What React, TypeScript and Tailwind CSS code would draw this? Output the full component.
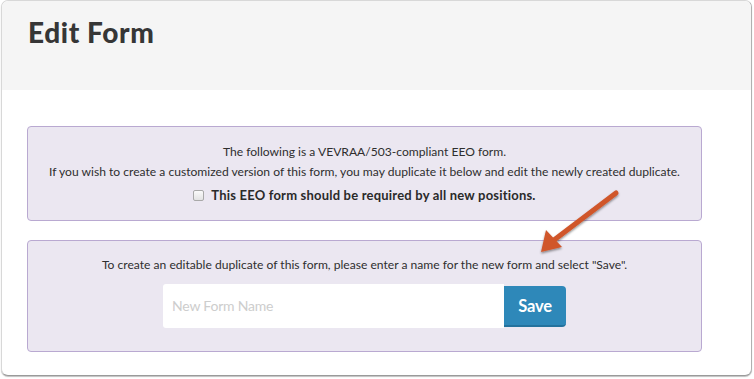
import React from "react";

export default function App() {
  return (
    <div className="relative w-[754px] h-[379px] bg-white overflow-hidden" style={{ fontFamily: "Lato, 'Open Sans', sans-serif" }}>
      <div className="ml-px w-[751px] h-[376px] border border-[#d8d8d8] border-b-[#9a9a9a] border-r-[#b0b0b0] rounded-[7px] overflow-hidden bg-white shadow-[0_1px_1px_rgba(0,0,0,0.25)]">
        <div className="h-[89px] bg-[#f5f5f5] pl-[26px] pt-[13px]">
          <h1 className="text-[28px] leading-[36px] font-black text-[#363636] tracking-[0.6px]">Edit Form</h1>
        </div>
        <div className="pt-[36px] pl-[25px]">
          <div className="w-[675px] h-[95px] bg-[#ebe7f1] border border-[#b9a9d1] rounded-[4px] pt-[15px] text-center text-[12.1px] leading-[20px] text-[#2e2e2e]">
            <p>The following is a VEVRAA/503-compliant EEO form.</p>
            <p>If you wish to create a customized version of this form, you may duplicate it below and edit the newly created duplicate.</p>
            <label className="mt-[3px] flex items-center justify-center gap-[7px] font-bold text-[13px] text-[#2a2a2a]">
              <span className="inline-block w-[11px] h-[11px] rounded-[2px] border border-[#a9a9a9] bg-gradient-to-b from-[#fafafa] to-[#e3e3e3]" />
              <span className="tracking-[0.2px]">This EEO form should be required by all new positions.</span>
            </label>
          </div>
          <div className="mt-[19px] w-[675px] h-[112px] bg-[#ebe7f1] border border-[#b9a9d1] rounded-[4px] pt-[14px] text-center text-[12.1px] leading-[20px] text-[#2e2e2e]">
            <p>To create an editable duplicate of this form, please enter a name for the new form and select "Save".</p>
            <div className="mt-[9px] flex justify-center items-start">
              <div className="w-[341px] h-[44px] bg-white rounded-l-[3px] flex items-center pl-[9px] text-[14px] text-[#cdcdcd] tracking-[-0.2px]">
                New Form Name
              </div>
              <div className="mt-[2px] w-[62px] h-[41px] bg-[#2e88b9] border-b-[2px] border-[#23729d] rounded-r-[4px] flex items-center justify-center text-white font-bold text-[16.5px] tracking-[-0.2px]">
                Save
              </div>
            </div>
          </div>
        </div>
      </div>
      <svg className="absolute left-0 top-0 pointer-events-none" width="754" height="379">
        <defs>
          <filter id="sh" x="-20%" y="-20%" width="140%" height="140%">
            <feDropShadow dx="0" dy="1.5" stdDeviation="1.2" floodColor="#000" floodOpacity="0.45" />
          </filter>
        </defs>
        <g filter="url(#sh)">
          <line x1="616" y1="193" x2="554" y2="240" stroke="#d0562b" strokeWidth="5" strokeLinecap="round" />
          <polygon points="541,252 546,230 562,247" fill="#d0562b" />
        </g>
      </svg>
    </div>
  );
}
